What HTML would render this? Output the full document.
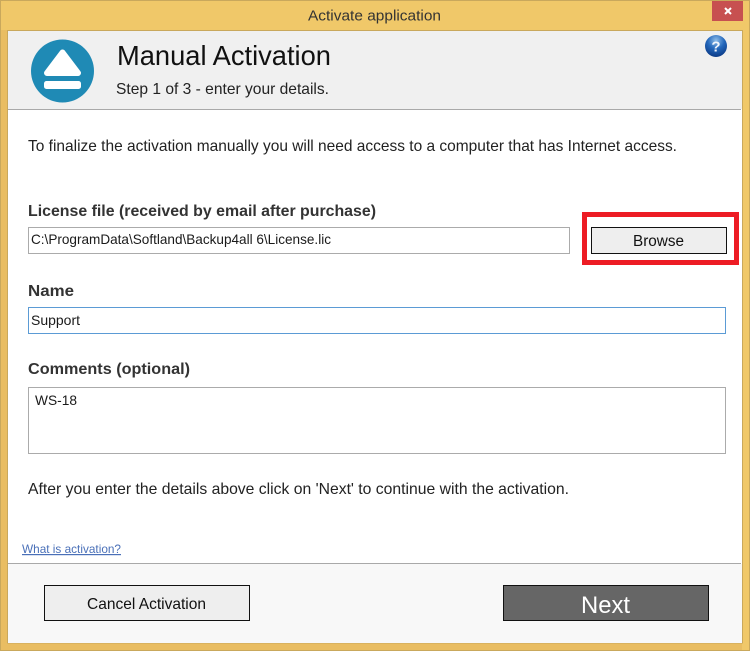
<!DOCTYPE html>
<html>
<head>
<meta charset="utf-8">
<title>Activate application</title>
<style>
html,body{margin:0;padding:0;background:#f0c869;width:750px;height:651px;overflow:hidden}
svg{display:block}
text{font-family:"Liberation Sans",sans-serif;fill:#1a1a1a}
.lab{font-weight:bold;fill:#333;font-size:15.8px}
.b{font-size:15.6px;fill:#222}
.i{font-size:14px;fill:#1a1a1a}
</style>
</head>
<body>
<svg width="750" height="651" viewBox="0 0 750 651" xmlns="http://www.w3.org/2000/svg">
<defs>
<radialGradient id="h" cx="50%" cy="25%" r="75%">
<stop offset="0" stop-color="#8fbde8"/>
<stop offset="0.5" stop-color="#2468bc"/>
<stop offset="1" stop-color="#0c3a86"/>
</radialGradient>
</defs>
<!-- window frame -->
<rect x="0" y="0" width="750" height="651" fill="#e9bd62"/>
<rect x="0" y="0" width="750" height="30" fill="#f0c869"/>
<rect x="742" y="0" width="8" height="651" fill="#f0c869"/>
<rect x="0.5" y="0.5" width="749" height="650" fill="none" stroke="#c9a85c"/>
<rect x="7.5" y="30.5" width="735" height="612.5" fill="#fff" stroke="#c9a85c"/>
<!-- close -->
<rect x="712" y="1" width="31" height="20" fill="#c75050"/>
<path d="M725 8l6 6M731 8l-6 6" stroke="#fff" stroke-width="2" fill="none"/>
<text x="308" y="20.5" font-size="15" textLength="133" lengthAdjust="spacingAndGlyphs" style="fill:#333">Activate application</text>
<!-- header -->
<rect x="8" y="31" width="734" height="78" fill="#f0f0f0"/>
<rect x="8" y="109" width="733" height="1" fill="#a9a9a9"/>
<circle cx="62.5" cy="71" r="31.5" fill="#1f8ab5"/>
<path d="M62.5 52.5L78 73H47Z" fill="#fff" stroke="#fff" stroke-width="6" stroke-linejoin="round"/>
<rect x="44" y="81" width="37" height="8" rx="2.5" fill="#fff"/>
<text x="117" y="65" font-size="27.5" textLength="214" lengthAdjust="spacingAndGlyphs" style="fill:#111">Manual Activation</text>
<text x="116" y="94" class="b" textLength="213" lengthAdjust="spacingAndGlyphs">Step 1 of 3 - enter your details.</text>
<circle cx="716" cy="46" r="11" fill="url(#h)"/>
<text x="716" y="51.5" font-size="15" font-weight="bold" text-anchor="middle" style="fill:#f2f6fc">?</text>
<!-- body -->
<text x="28" y="151" class="b" textLength="649" lengthAdjust="spacingAndGlyphs">To finalize the activation manually you will need access to a computer that has Internet access.</text>
<text x="28" y="216" class="lab" textLength="348" lengthAdjust="spacingAndGlyphs">License file (received by email after purchase)</text>
<rect x="28.5" y="227.5" width="541" height="26" fill="#fff" stroke="#ababab"/>
<text x="31" y="244" class="i" textLength="300" lengthAdjust="spacingAndGlyphs">C:\ProgramData\Softland\Backup4all 6\License.lic</text>
<rect x="584.5" y="214.5" width="152" height="48" fill="none" stroke="#ed1c24" stroke-width="5"/>
<rect x="591.5" y="227.5" width="135" height="26" fill="#eee" stroke="#111"/>
<text x="633" y="246" font-size="15.5" textLength="51" lengthAdjust="spacingAndGlyphs" style="fill:#111">Browse</text>
<text x="28" y="296" class="lab" textLength="46" lengthAdjust="spacingAndGlyphs">Name</text>
<rect x="28.5" y="307.5" width="697" height="26" fill="#fff" stroke="#5b9bd5"/>
<text x="31" y="325" class="i" textLength="49" lengthAdjust="spacingAndGlyphs">Support</text>
<text x="28" y="374" class="lab" textLength="162" lengthAdjust="spacingAndGlyphs">Comments (optional)</text>
<rect x="28.5" y="387.5" width="697" height="66" fill="#fff" stroke="#ababab"/>
<text x="35" y="405" class="i" textLength="42" lengthAdjust="spacingAndGlyphs">WS-18</text>
<text x="28" y="494" class="b" textLength="541" lengthAdjust="spacingAndGlyphs">After you enter the details above click on 'Next' to continue with the activation.</text>
<text x="22" y="553" font-size="12" textLength="99" lengthAdjust="spacingAndGlyphs" text-decoration="underline" style="fill:#4a70b8">What is activation?</text>
<!-- footer -->
<rect x="8" y="564" width="734" height="79" fill="#f8f8f8"/>
<rect x="8" y="563" width="733" height="1" fill="#a9a9a9"/>
<rect x="44.5" y="585.5" width="205" height="35" fill="#eee" stroke="#111"/>
<text x="87" y="609" font-size="16" textLength="119" lengthAdjust="spacingAndGlyphs" style="fill:#111">Cancel Activation</text>
<rect x="503.5" y="585.5" width="205" height="35" fill="#666" stroke="#111"/>
<text x="581" y="613" font-size="24" textLength="49" lengthAdjust="spacingAndGlyphs" style="fill:#fff">Next</text>
</svg>
</body>
</html>
